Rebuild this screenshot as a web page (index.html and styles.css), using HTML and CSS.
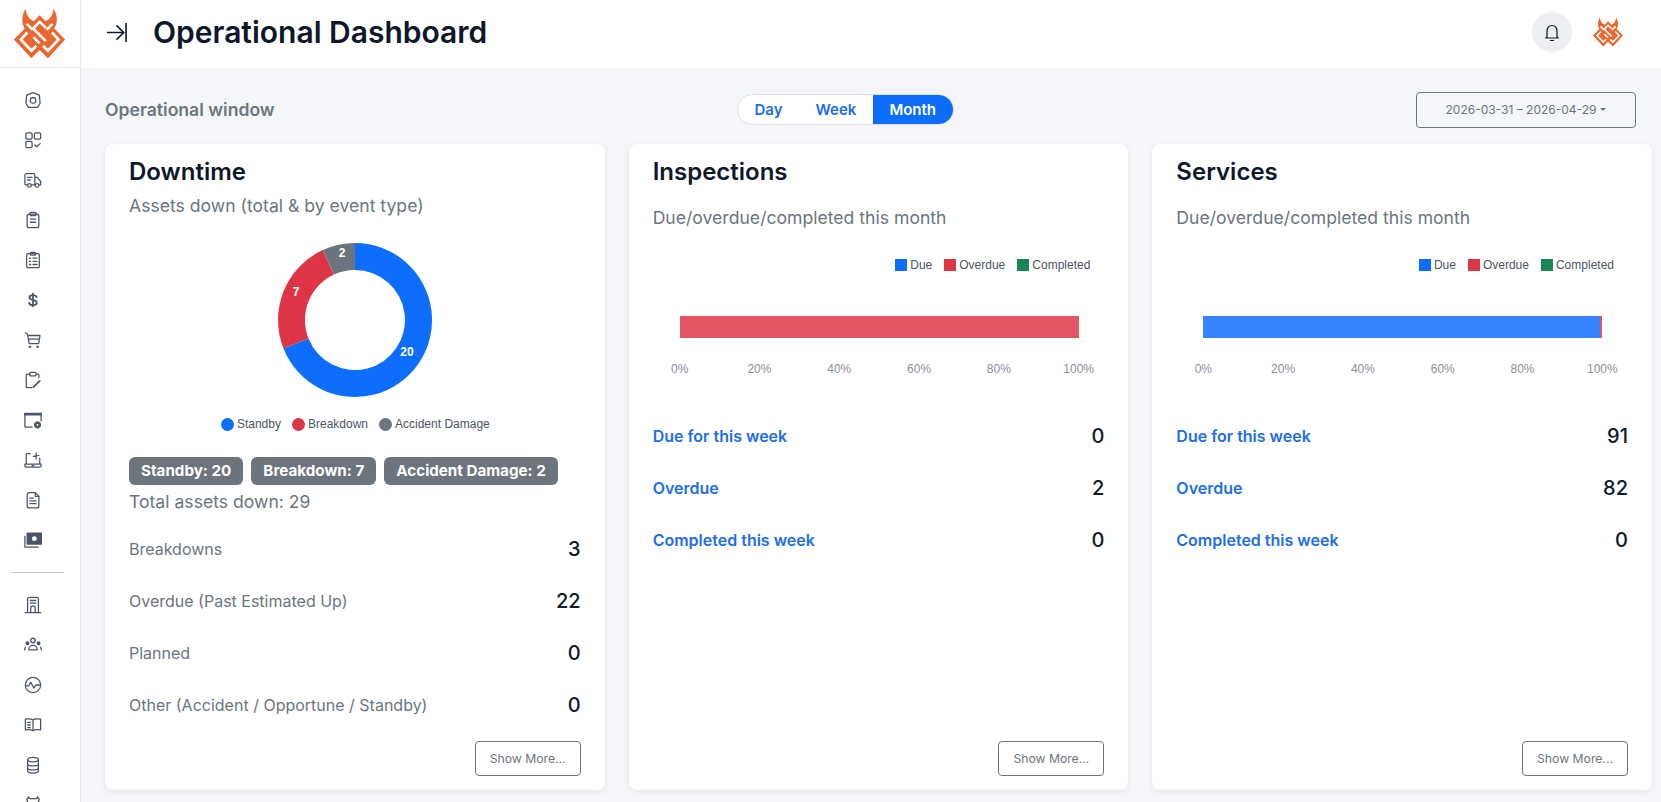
FILE: index.html
```html
<!DOCTYPE html>
<html lang="en">
<head>
<meta charset="utf-8">
<title>Operational Dashboard</title>
<link rel="stylesheet" href="styles.css">
</head>
<body>
<svg class="defs" width="0" height="0" aria-hidden="true">
  <symbol id="logo" viewBox="30 15 165 160">
    <path fill="#e9672f" d="M70 20C58 42 58 62 68 80L35 113 88 170 113 145 138 170 190 113 157 80C168 62 168 42 155 20 153 40 143 52 131 58L113 40 95 58C83 52 72 40 70 20Z"/>
    <g fill="none" stroke="#fff" stroke-width="8" stroke-linejoin="miter">
      <path d="M76 92 56 113 88 147 103 132"/>
      <path d="M150 92 170 113 138 147 123 132"/>
      <path d="M132 78 113 60 93 80 132 118"/>
      <path d="M94 106 113 125"/>
      <path d="M74 66 92 84M152 66 134 84"/>
    </g>
  </symbol>
</svg>
<div class="app">
  <aside class="sidebar">
    <div class="side-logo"><svg class="logo-lg"><use href="#logo"/></svg></div>
    <nav class="side-nav">
      <a class="nav-i"><svg viewBox="0 0 20 20"><path d="M10 1.800 17 4.600l.9 9-2.700 4.600H4.800L2.100 13.600 3 4.600Z"/><rect x="7" y="7.500" width="6" height="6" rx="2"/></svg></a>
      <a class="nav-i"><svg viewBox="0 0 20 20"><rect x="2" y="2" width="7" height="7" rx="1.500"/><rect x="11.500" y="2" width="7" height="7" rx="1.500"/><rect x="2" y="11.500" width="7" height="7" rx="1.500"/><path d="m12 15.500 2 2 4-3.500"/></svg></a>
      <a class="nav-i"><svg viewBox="0 0 20 20"><path d="M4 15.500H2.500A1.500 1.500 0 0 1 1 14V4.500A1.500 1.500 0 0 1 2.500 3h8A1.500 1.500 0 0 1 12 4.500v11H8M12 7h3l3.500 4.500v4H16.500M4 7h5M4 10h3"/><circle cx="6" cy="16" r="2"/><circle cx="14.500" cy="16" r="2"/></svg></a>
      <a class="nav-i"><svg viewBox="0 0 20 20"><rect x="3.500" y="3.500" width="13" height="15" rx="2.500"/><rect x="6.500" y="1.500" width="7" height="3.500" rx="1.500"/><path d="M7 9h6M7 12.500h6"/></svg></a>
      <a class="nav-i"><svg viewBox="0 0 20 20"><rect x="3" y="3" width="14" height="15.500" rx="1.200"/><rect x="7" y="1.500" width="6" height="3" rx="1"/><path d="M6 8h1.500M6 11.500h1.500M6 15h1.500M10 8h4.500M10 11.500h4.500M10 15h4.500"/></svg></a>
      <a class="nav-i"><svg viewBox="0 0 20 20"><path class="thick" d="M14 6.700C13.500 5.200 12 4.500 10 4.500c-2.300 0-4 1-4 2.800 0 3.800 8.200 1.900 8.200 5.700 0 1.700-1.800 2.700-4.200 2.700-2.300 0-3.900-.8-4.300-2.400M10 3v14"/></svg></a>
      <a class="nav-i"><svg viewBox="0 0 20 20"><path d="M1.500 2 3.800 3.500l2 10.500h10.500l1.500-9H4.200M5 9h12"/><path class="thick" d="M6 17.500h1.200M14.500 17.500h1.200"/></svg></a>
      <a class="nav-i"><svg viewBox="0 0 20 20"><path d="M6.500 3.500H3.500A1 1 0 0 0 2.500 4.500v13A1 1 0 0 0 3.500 18.500h5M13.500 3.500h2A1 1 0 0 1 16.500 4.500v3"/><rect x="6.500" y="1.500" width="7" height="4" rx="1"/><path class="thick" d="m10.500 18 7-7"/></svg></a>
      <a class="nav-i"><svg viewBox="0 0 20 20"><path d="M9 18H2.200A1.200 1.200 0 0 1 1 16.800V3h18v8"/><path class="thicker" d="M1 3.500h18"/><circle class="fill" cx="15" cy="15.500" r="2.500"/><circle class="gear" cx="15" cy="15.500" r="3.300"/><circle class="hole" cx="15" cy="15.500" r="1"/></svg></a>
      <a class="nav-i"><svg viewBox="0 0 20 20"><path d="M7 3H3.500A1 1 0 0 0 2.500 4v10M17.500 8v6M1 14.500h18v2a1.500 1.500 0 0 1-1.500 1.500h-15A1.500 1.500 0 0 1 1 16.500ZM9 16.300h2M13.500 2v7M10.500 6l6 -1"/></svg></a>
      <a class="nav-i"><svg viewBox="0 0 20 20"><path d="M12.500 1.800H6A2.500 2.500 0 0 0 3.500 4.300v12A2.500 2.500 0 0 0 6 18.800h8a2.500 2.500 0 0 0 2.500-2.500V6Z"/><path d="M12.500 1.800V6h4M6.500 8h4M6.500 11h7M6.500 14h7"/></svg></a>
      <a class="nav-i"><svg viewBox="0 0 20 20"><path d="M1 6v12h15"/><rect class="fill" x="3.500" y="2.500" width="16" height="12"/><circle class="hole" cx="11.500" cy="8.500" r="2.700"/></svg></a>
      <hr class="side-rule">
      <a class="nav-i"><svg viewBox="0 0 20 20"><path d="M4 18.500V3.500A2 2 0 0 1 6 1.500h8a2 2 0 0 1 2 2v15M1.500 18.500h17M7.500 18.500V13.500a2.500 2.500 0 0 1 5 0v5M7 5h6M7 8h6"/></svg></a>
      <a class="nav-i"><svg viewBox="0 0 20 20"><circle cx="10" cy="5" r="2.500"/><path d="M5.500 15.500v-1.500a4.500 3.500 0 0 1 9 0v1.500Z"/><circle class="fill" cx="3.800" cy="8" r="1.500"/><circle class="fill" cx="16.200" cy="8" r="1.500"/><path d="M.5 15.500l1-3M19.500 15.500l-1-3"/></svg></a>
      <a class="nav-i"><svg viewBox="0 0 20 20"><circle cx="10" cy="10" r="8.500"/><path d="M1.500 11H5l2.500-4 3.500 6.500 2-3.500h5.500"/></svg></a>
      <a class="nav-i"><svg viewBox="0 0 20 20"><path d="M10 4.500C8.500 3 5 3 1.500 3.500v12c3.500-.5 7-.5 8.500 1 1.500-1.500 5-1.500 8.500-1v-12C15 3 11.500 3 10 4.500ZM10 4.500v12M4 7h3M4 10h3M4 13h3"/></svg></a>
      <a class="nav-i"><svg viewBox="0 0 20 20"><ellipse cx="10" cy="4" rx="6" ry="2.500"/><path d="M4 4v12.500C4 18 6.700 19 10 19s6-1 6-2.500V4M4 8.500C4 10 6.700 11 10 11s6-1 6-2.500M4 13C4 14.500 6.700 15.500 10 15.500s6-1 6-2.500"/></svg></a>
      <a class="nav-i"><svg viewBox="0 0 20 20"><path d="M6 3h8l1-2 2 3-1 2 1 8H3l1-8-1-2 2-3Z"/></svg></a>
    </nav>
  </aside>
  <div class="main">
    <header class="topbar">
      <div class="top-left">
        <svg class="toggle" viewBox="0 0 22 22"><path d="M1 11h17M11 3.500l7.500 7.500-7.500 7.500M21 1v20"/></svg>
        <h1>Operational Dashboard</h1>
      </div>
      <div class="top-right">
        <span class="bell"><svg viewBox="0 0 20 20"><path d="M5 15V8.500a5 5 0 0 1 10 0V15l1.200 1H3.800ZM8.500 18.500h3"/></svg></span>
        <svg class="logo-sm"><use href="#logo"/></svg>
      </div>
    </header>
    <main class="content">
      <div class="window-row">
        <span class="window-label">Operational window</span>
        <div class="segment">
          <button class="seg-btn">Day</button>
          <button class="seg-btn">Week</button>
          <button class="seg-btn on">Month</button>
        </div>
        <button class="date-btn">2026-03-31 – 2026-04-29<i class="caret"></i></button>
      </div>
      <div class="cards">
        <section class="card">
          <h2>Downtime</h2>
          <p class="sub sub-tight">Assets down (total &amp; by event type)</p>
          <div class="donut-wrap">
            <svg class="donut" viewBox="0 0 160 160">
              <path fill="#0d6efd" d="M80 3A77 77 0 1 1 8.500 108.500L33.500 98.500A50 50 0 1 0 80 30Z"/>
              <path fill="#dc3545" d="M8.500 108.500A77 77 0 0 1 47.700 10.100L59 34.600A50 50 0 0 0 33.500 98.500Z"/>
              <path fill="#6c757d" d="M47.700 10.100A77 77 0 0 1 80 3V30A50 50 0 0 0 59 34.600Z"/>
              <text x="132" y="116" class="d-label">20</text>
              <text x="21" y="56" class="d-label">7</text>
              <text x="67" y="17" class="d-label">2</text>
            </svg>
            <div class="d-legend">
              <span><i class="dot blue"></i>Standby</span>
              <span><i class="dot red"></i>Breakdown</span>
              <span><i class="dot grey"></i>Accident Damage</span>
            </div>
          </div>
          <div class="badges">
            <span class="badge">Standby: 20</span>
            <span class="badge">Breakdown: 7</span>
            <span class="badge">Accident Damage: 2</span>
          </div>
          <p class="total">Total assets down: 29</p>
          <ul class="stats plain">
            <li><span>Breakdowns</span><b>3</b></li>
            <li><span>Overdue (Past Estimated Up)</span><b>22</b></li>
            <li><span>Planned</span><b>0</b></li>
            <li><span>Other (Accident / Opportune / Standby)</span><b>0</b></li>
          </ul>
          <div class="card-foot"><button class="more">Show More...</button></div>
        </section>
        <section class="card">
          <h2>Inspections</h2>
          <p class="sub">Due/overdue/completed this month</p>
          <div class="bar-chart">
            <div class="b-legend">
              <span><i class="sq blue"></i>Due</span>
              <span><i class="sq red"></i>Overdue</span>
              <span><i class="sq green"></i>Completed</span>
            </div>
            <div class="bar"><i class="seg-red" style="width:100%"></i></div>
            <div class="axis"><span>0%</span><span>20%</span><span>40%</span><span>60%</span><span>80%</span><span>100%</span></div>
          </div>
          <ul class="stats links">
            <li><a>Due for this week</a><b>0</b></li>
            <li><a>Overdue</a><b>2</b></li>
            <li><a>Completed this week</a><b>0</b></li>
          </ul>
          <div class="card-foot"><button class="more">Show More...</button></div>
        </section>
        <section class="card">
          <h2>Services</h2>
          <p class="sub">Due/overdue/completed this month</p>
          <div class="bar-chart">
            <div class="b-legend">
              <span><i class="sq blue"></i>Due</span>
              <span><i class="sq red"></i>Overdue</span>
              <span><i class="sq green"></i>Completed</span>
            </div>
            <div class="bar"><i class="seg-blue" style="width:99.5%"></i><i class="seg-red" style="width:0.5%"></i></div>
            <div class="axis"><span>0%</span><span>20%</span><span>40%</span><span>60%</span><span>80%</span><span>100%</span></div>
          </div>
          <ul class="stats links">
            <li><a>Due for this week</a><b>91</b></li>
            <li><a>Overdue</a><b>82</b></li>
            <li><a>Completed this week</a><b>0</b></li>
          </ul>
          <div class="card-foot"><button class="more">Show More...</button></div>
        </section>
      </div>
    </main>
  </div>
</div>
</body>
</html>
```
FILE: styles.css
```css
* { box-sizing: border-box; }
html, body { margin: 0; height: 100%; overflow: hidden; }
body { font-family: Inter, "Liberation Sans", sans-serif; color: #0f172a; background: #f4f6fa; }
.defs { display: block; height: 0; }
.app { display: flex; height: 802px; }

.sidebar { width: 81px; flex: none; background: #fff; border-right: 1px solid #e8eaee; overflow: hidden; }
.side-logo { height: 68px; border-bottom: 1px solid #e8eaee; display: flex; align-items: center; justify-content: center; }
.logo-lg { width: 55px; height: 53px; margin-right: 1px; }
.side-nav { display: flex; flex-direction: column; padding-top: 12px; }
.nav-i { height: 40px; flex: none; display: flex; align-items: center; padding-left: 24px; }
.nav-i svg { width: 18px; height: 18px; fill: none; stroke: #4b5563; stroke-width: 1.400; stroke-linecap: round; stroke-linejoin: round; }
.nav-i .thick { stroke-width: 2; }
.nav-i .thicker { stroke-width: 3; }
.nav-i .gear { stroke-dasharray: 2 1.500; stroke-width: 1.500; }
.nav-i .fill { fill: #4b5563; }
.nav-i .hole { fill: #fff; stroke: none; }
.side-rule { width: 53px; margin: 12px 0 12px 11px; border: 0; border-top: 1px solid #c9ccd1; }

.main { flex: 1; min-width: 0; display: flex; flex-direction: column; }
.topbar { height: 68px; flex: none; background: #fff; display: flex; align-items: center; justify-content: space-between; padding: 0 37px 4px 25px; }
.top-left { display: flex; align-items: center; gap: 26px; }
.toggle { width: 21px; height: 21px; fill: none; stroke: #111827; stroke-width: 1.700; }
h1 { margin: 0; font-size: 30px; line-height: 36px; font-weight: 600; color: #0f172a; }
.top-right { display: flex; align-items: center; gap: 20px; }
.bell { width: 40px; height: 40px; border-radius: 50%; background: #eceef1; display: flex; align-items: center; justify-content: center; }
.bell svg { width: 20px; height: 20px; fill: none; stroke: #111827; stroke-width: 1.200; stroke-linecap: round; stroke-linejoin: round; }
.logo-sm { width: 32px; height: 32px; }

.content { flex: 1; min-width: 0; padding: 0 9px 0 24px; }
.window-row { height: 76px; padding-right: 16px; padding-top: 7px; display: flex; align-items: center; justify-content: space-between; }
.window-label { font-size: 17.600px; font-weight: 600; color: #6c757d; }
.segment { display: flex; height: 31px; border: 1px solid #dee2e6; border-radius: 16px; background: #fff; overflow: hidden; }
.seg-btn { border: 0; background: none; font: 600 15px Inter, sans-serif; color: #1d6ee6; padding: 0 16.500px; }
.seg-btn.on { background: #0d6efd; color: #fff; }
.date-btn { width: 220px; height: 36px; border: 1px solid #6c757d; border-radius: 4px; background: none; font: 400 12px Inter, sans-serif; color: #6c757d; display: flex; align-items: center; justify-content: center; }
.caret { margin-left: 4px; border: 3.500px solid transparent; border-top-color: #6c757d; border-bottom: 0; }

.cards { display: grid; grid-template-columns: repeat(3, 1fr); gap: 24px; }
.card { height: 646px; background: #fff; border-radius: 8px; box-shadow: 0 2px 6px rgba(15, 23, 42, .08); padding: 13px 24px 14px; display: flex; flex-direction: column; }
h2 { margin: 0; font-size: 24px; line-height: 30px; font-weight: 600; color: #0f172a; }
.sub { margin: 19px 0 0; font-size: 17.600px; line-height: 24px; color: #6c757d; height: 24px; }
.sub-tight { margin-top: 7px; }

.donut-wrap { display: flex; flex-direction: column; align-items: center; }
.donut { width: 160px; height: 160px; margin-top: 22px; }
.d-label { font: 700 12px "Liberation Sans", sans-serif; fill: #fff; text-anchor: middle; }
.d-legend { display: flex; gap: 11px; margin-top: 17px; padding-left: 1px; font: 12px/14px "Liberation Sans", sans-serif; color: #4b5563; }
.d-legend span { display: flex; align-items: center; gap: 3px; }
.dot { width: 13px; height: 13px; border-radius: 50%; }
.blue { background: #0d6efd; }
.red { background: #dc3545; }
.grey { background: #6c757d; }
.green { background: #198754; }

.badges { display: flex; gap: 8px; margin-top: 26px; }
.badge { height: 28px; padding: 0 12px; border-radius: 6px; background: #6c757d; color: #fff; font-size: 15.200px; font-weight: 700; line-height: 28px; }
.total { margin: 5px 0 0; font-size: 17.600px; line-height: 24px; color: #6c757d; }

.stats { list-style: none; margin: 0; padding: 0; }
.stats li { height: 52px; display: flex; align-items: center; justify-content: space-between; }
.stats span { font-size: 16px; color: #6c757d; }
.stats b { font-size: 20px; font-weight: 500; color: #111827; }
.plain { margin-top: 9px; }
.links { margin-top: 20px; }
.links a { font-size: 16px; font-weight: 600; color: #1d6ee6; }

.card-foot { margin-top: auto; display: flex; justify-content: flex-end; }
.more { width: 106px; height: 35px; border: 1px solid #6c757d; border-radius: 4px; background: #fff; font: 400 12.200px Inter, sans-serif; color: #6c757d; }

.bar-chart { height: 160px; padding-top: 28px; }
.b-legend { display: flex; justify-content: flex-end; gap: 12px; padding-right: 14px; font: 12px/14px "Liberation Sans", sans-serif; color: #4b5563; }
.b-legend span { display: flex; align-items: center; gap: 3px; }
.sq { width: 12px; height: 12px; }
.bar { margin: 44px 0 0 27px; width: 399px; height: 22px; display: flex; }
.bar i { display: block; height: 100%; }
.seg-red { background: #e35563; }
.seg-blue { background: #3783fd; }
.axis { width: 399px; margin: 24px 0 0 27px; display: flex; justify-content: space-between; font: 12px/14px "Liberation Sans", sans-serif; color: #8b9098; }
.axis span { width: 0; display: flex; justify-content: center; white-space: nowrap; }
```
